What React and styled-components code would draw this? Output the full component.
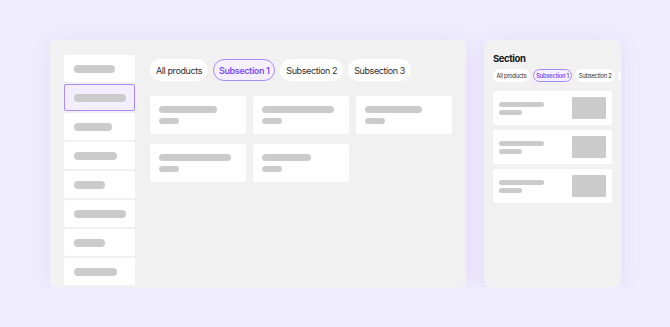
import React from "react";
import styled, { createGlobalStyle } from "styled-components";

const GlobalStyle = createGlobalStyle`
  html, body {
    margin: 0;
    padding: 0;
    background: #f0edfd;
    font-family: Inter, "Noto Sans", sans-serif;
  }
`;

const sideBars = [41, 52, 38, 43, 31, 52, 31, 43];
const mainCards = [58, 72, 57, 72, 49];
const tabs = ["All products", "Subsection 1", "Subsection 2", "Subsection 3"];

const App = () => {
  return (
    <>
      <GlobalStyle />
      <Page>
        <MainPanel>
          <Sidebar>
            {sideBars.map((w, i) => (
              <SideItem key={i} $active={i === 1}>
                <Bar $w={w} />
              </SideItem>
            ))}
          </Sidebar>
          <Content>
            <Tabs>
              {tabs.map((t, i) => (
                <Tab key={t} $active={i === 1}>
                  {t}
                </Tab>
              ))}
            </Tabs>
            <CardGrid>
              {mainCards.map((w, i) => (
                <Card key={i}>
                  <Bar $w={w} />
                  <SmallBar />
                </Card>
              ))}
            </CardGrid>
          </Content>
        </MainPanel>

        <MobilePanel>
          <Title>Section</Title>
          <MiniTabs>
            {tabs.map((t, i) => (
              <MiniTab key={t} $active={i === 1}>
                {t}
              </MiniTab>
            ))}
          </MiniTabs>
          <MiniList>
            {[0, 1, 2].map((i) => (
              <MiniCard key={i}>
                <MiniLines>
                  <MiniBar $w={45} />
                  <MiniBar $w={23} />
                </MiniLines>
                <Thumb />
              </MiniCard>
            ))}
          </MiniList>
        </MobilePanel>
      </Page>
    </>
  );
};

export default App;

const Page = styled.div`
  display: flex;
  align-items: flex-start;
  gap: 18px;
  padding: 40px 0 0 50px;
`;

const MainPanel = styled.div`
  width: 416px;
  height: 247px;
  box-sizing: border-box;
  display: flex;
  gap: 15px;
  padding: 15px 13px 0 14px;
  background: #f1f1f1;
  border-radius: 5px;
  overflow: hidden;
  box-shadow: 0 2px 22px rgba(130, 100, 230, 0.13);
`;

const Sidebar = styled.div`
  width: 71px;
  flex-shrink: 0;
  display: flex;
  flex-direction: column;
  gap: 2px;
`;

const SideItem = styled.div`
  height: 27px;
  flex-shrink: 0;
  box-sizing: border-box;
  display: flex;
  align-items: center;
  padding-left: 9px;
  background: ${(p) => (p.$active ? "#f2eeff" : "#ffffff")};
  border: 1px solid ${(p) => (p.$active ? "#a88af8" : "transparent")};
  border-radius: 2px;
`;

const Bar = styled.div`
  width: ${(p) => p.$w}px;
  height: 8px;
  border-radius: 4px;
  background: #cbcbcb;
`;

const SmallBar = styled.div`
  width: 20px;
  height: 6px;
  border-radius: 3px;
  background: #cbcbcb;
`;

const Content = styled.div`
  flex: 1;
  padding-top: 4px;
  display: flex;
  flex-direction: column;
  gap: 15px;
`;

const Tabs = styled.div`
  display: flex;
  gap: 5px;
`;

const Tab = styled.div`
  height: 22px;
  box-sizing: border-box;
  display: flex;
  align-items: center;
  padding: 0 5px;
  border-radius: 11px;
  font-size: 9px;
  letter-spacing: -0.4px;
  white-space: nowrap;
  background: ${(p) => (p.$active ? "#f4f0ff" : "#ffffff")};
  border: 1px solid ${(p) => (p.$active ? "#a88af8" : "transparent")};
  color: ${(p) => (p.$active ? "#7b4ff5" : "#2e2e2e")};
  font-weight: ${(p) => (p.$active ? 600 : 400)};
`;

const CardGrid = styled.div`
  display: grid;
  grid-template-columns: repeat(3, 96px);
  column-gap: 7px;
  row-gap: 10px;
`;

const Card = styled.div`
  height: 38px;
  box-sizing: border-box;
  padding: 10px 9px;
  display: flex;
  flex-direction: column;
  gap: 5px;
  background: #ffffff;
  border-radius: 2px;
`;

const MobilePanel = styled.div`
  width: 137px;
  height: 247px;
  box-sizing: border-box;
  padding: 12px 9px 0;
  background: #f1f1f1;
  border-radius: 7px;
  overflow: hidden;
  box-shadow: 0 2px 22px rgba(130, 100, 230, 0.13);
`;

const Title = styled.div`
  font-size: 9.5px;
  font-weight: 700;
  letter-spacing: -0.4px;
  color: #151515;
  line-height: 13px;
`;

const MiniTabs = styled.div`
  display: flex;
  gap: 3px;
  margin-top: 4px;
`;

const MiniTab = styled.div`
  height: 13px;
  box-sizing: border-box;
  flex-shrink: 0;
  display: flex;
  align-items: center;
  padding: 0 2.5px;
  border-radius: 7px;
  font-size: 5.8px;
  letter-spacing: -0.25px;
  white-space: nowrap;
  background: ${(p) => (p.$active ? "#f4f0ff" : "#ffffff")};
  border: 1px solid ${(p) => (p.$active ? "#a88af8" : "transparent")};
  color: ${(p) => (p.$active ? "#7b4ff5" : "#2e2e2e")};
  font-weight: ${(p) => (p.$active ? 600 : 400)};
`;

const MiniList = styled.div`
  margin-top: 9px;
  display: flex;
  flex-direction: column;
  gap: 5px;
`;

const MiniCard = styled.div`
  height: 34px;
  box-sizing: border-box;
  display: flex;
  align-items: center;
  justify-content: space-between;
  padding: 0 6px;
  background: #ffffff;
  border-radius: 2px;
`;

const MiniLines = styled.div`
  display: flex;
  flex-direction: column;
  gap: 3px;
`;

const MiniBar = styled.div`
  width: ${(p) => p.$w}px;
  height: 5px;
  border-radius: 2.5px;
  background: #cbcbcb;
`;

const Thumb = styled.div`
  width: 34px;
  height: 22px;
  border-radius: 1px;
  background: #cbcbcb;
`;
